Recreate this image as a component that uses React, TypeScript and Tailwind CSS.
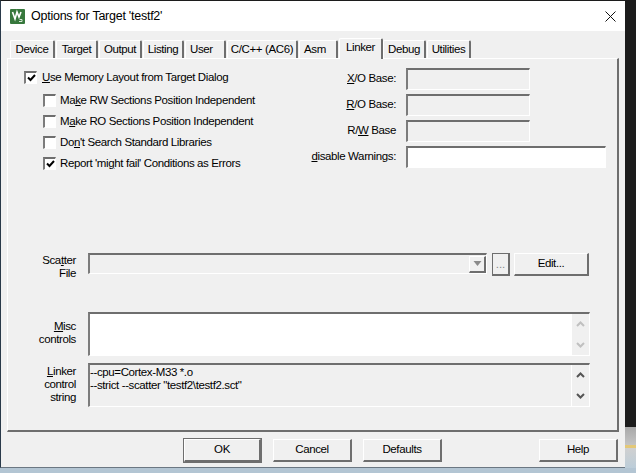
import React from 'react';

const font = 'font-["Liberation_Sans",Arial,sans-serif]';
const sunken = 'border-t-2 border-l-2 border-b border-r border-t-[#6e6e6e] border-l-[#7c7c7c] border-b-white border-r-white';
const raised = 'border-t border-l border-b-2 border-r-2 border-t-white border-l-white border-b-[#6e6e6e] border-r-[#6e6e6e]';

const tabs = [
  { label: 'Device', w: 'w-[45px]', align: 'text-center' },
  { label: 'Target', w: 'w-[42px]', align: 'text-center' },
  { label: 'Output', w: 'w-[43px]', align: 'text-center' },
  { label: 'Listing', w: 'w-[41px]', align: 'text-center' },
  { label: 'User', w: 'w-[41px]', align: 'text-left pl-[4px]' },
  { label: 'C/C++ (AC6)', w: 'w-[71px]', align: 'text-center' },
  { label: 'Asm', w: 'w-[39px]', align: 'text-left pl-[4px]' },
];

const Tab = ({ label, w, align = 'text-center' }: { label: string; w: string; align?: string }) => (
  <div className={`${w} ${align} h-[18px] mr-[1px] border-t border-l border-r-2 border-t-white border-l-white border-r-[#6e6e6e] rounded-t-[2px] leading-[17px] whitespace-nowrap`}>
    {label}
  </div>
);

const Check = ({ checked }: { checked?: boolean }) => (
  <span className={`${sunken} w-[13px] h-[13px] bg-white flex items-center justify-center shrink-0`}>
    {checked && (
      <svg width="9" height="8" viewBox="0 0 9 8">
        <path d="M1 3.5 L3.5 6 L8 1" fill="none" stroke="#000" strokeWidth="2" />
      </svg>
    )}
  </span>
);

const CheckRow = ({ checked, children }: { checked?: boolean; children: React.ReactNode }) => (
  <div className="flex items-center h-[21px] gap-[4px] ml-[35px]">
    <Check checked={checked} />
    <span className="mt-[1px]">{children}</span>
  </div>
);

const BaseField = ({ label, white }: { label: React.ReactNode; white?: boolean }) => (
  <div className="flex items-center h-[22px] mb-[4px]">
    <span className="w-[100px] text-right mr-[10px] whitespace-nowrap">{label}</span>
    <div className={`${sunken} h-[22px] ${white ? 'w-[200px] bg-white' : 'w-[124px]'}`} />
  </div>
);

const Chevron = ({ up, color }: { up?: boolean; color: string }) => (
  <svg width="9" height="6" viewBox="0 0 9 6">
    <path d={up ? 'M1 5 L4.5 1.5 L8 5' : 'M1 1 L4.5 4.5 L8 1'} fill="none" stroke={color} strokeWidth="2" />
  </svg>
);

const Label = ({ children }: { children: React.ReactNode }) => (
  <div className="w-[68px] text-right leading-[13px] shrink-0">{children}</div>
);

const Btn = ({ children, w, strong }: { children: string; w: string; strong?: boolean }) => (
  <div className={`${w} h-[23px] flex items-center justify-center ${raised} ${strong ? 'outline outline-1 outline-[#6e6e6e]' : ''}`}>
    {children}
  </div>
);

export default function App() {
  return (
    <div className={`${font} w-[636px] h-[473px] overflow-hidden flex flex-col bg-[#b3c5d3] text-[11.5px] text-black tracking-[-0.38px]`}>
      <div className="flex h-[468px]">
        <div className="w-[625px] flex flex-col border-l border-t border-b border-t-[#1c1c1c] border-l-[#2a3a4a] border-b-[#6b7782] bg-[#f0f0f0]">
          {/* title bar */}
          <div className="h-[30px] bg-white flex items-center pl-[9px] shrink-0">
            <svg width="15" height="15" viewBox="0 0 15 15">
              <rect width="15" height="15" rx="1" fill="#37783c" />
              <path d="M2.5 3 L5 10 L7 3 L9 8 L11 3" fill="none" stroke="#fff" strokeWidth="1.6" />
              <path d="M9 12.5 H12 V10.5 H9.5" fill="none" stroke="#d8e8d8" strokeWidth="1" />
            </svg>
            <span className="ml-[6px] text-[12.5px] tracking-[-0.25px]">Options for Target 'testf2'</span>
            <svg className="ml-auto mr-[9px]" width="11" height="11" viewBox="0 0 11 11">
              <path d="M0.5 0.5 L10.5 10.5 M10.5 0.5 L0.5 10.5" stroke="#111" strokeWidth="1" />
            </svg>
          </div>

          <div className="flex-1 px-[6px] pt-[6px] flex flex-col">
            {/* tabs */}
            <div className="flex items-end h-[21px] pl-[3px]">
              {tabs.map((t) => (
                <Tab key={t.label} label={t.label} w={t.w} align={t.align} />
              ))}
              <div className="w-[44px] h-[21px] -mb-[1px] z-10 bg-[#f0f0f0] border-t border-l border-r-2 border-t-white border-l-white border-r-[#6e6e6e] rounded-t-[2px] text-center leading-[17px]">
                Linker
              </div>
              <Tab label="Debug" w="w-[43px]" />
              <Tab label="Utilities" w="w-[44px]" />
            </div>

            {/* linker page */}
            <div className="w-[612px] h-[374px] border-t border-l border-r-2 border-b-2 border-t-white border-l-white border-r-[#6e6e6e] border-b-[#6e6e6e] flex flex-col">
              <div className="flex justify-between h-[184px] shrink-0">
                <div className="pt-[8px]">
                  <div className="flex items-center h-[21px] gap-[5px] ml-[16px] mb-[2px]">
                    <Check checked />
                    <span><u>U</u>se Memory Layout from Target Dialog</span>
                  </div>
                  <CheckRow>Ma<u>k</u>e RW Sections Position Independent</CheckRow>
                  <CheckRow>M<u>a</u>ke RO Sections Position Independent</CheckRow>
                  <CheckRow>Do<u>n</u>'t Search Standard Libraries</CheckRow>
                  <CheckRow checked>Report 'mi<u>g</u>ht fail' Conditions as Errors</CheckRow>
                </div>
                <div className="pt-[9px] w-[310px] mr-[11px]">
                  <BaseField label={<><u>X</u>/O Base:</>} />
                  <BaseField label={<><u>R</u>/O Base:</>} />
                  <BaseField label={<>R/<u>W</u> Base</>} />
                  <BaseField white label={<><u>d</u>isable Warnings:</>} />
                </div>
              </div>

              {/* scatter file */}
              <div className="flex h-[23px] mt-[10px] shrink-0">
                <Label>
                  <div className="mt-[1px]">Sca<u>t</u>ter</div>
                  <div>File</div>
                </Label>
                <div className={`${sunken} ml-[12px] w-[399px] h-[21px] flex justify-end items-center`}>
                  <div className={`${raised} w-[17px] h-[17px] flex items-center justify-center`}>
                    <svg width="9" height="5" viewBox="0 0 9 5"><path d="M0.5 0 H8.5 L4.5 5 Z" fill="#8a8a8a" /></svg>
                  </div>
                </div>
                <div className="ml-[5px] w-[18px] h-[23px] border-t border-l border-b-2 border-r-2 border-[#6e6e6e] flex items-end pb-[1px] justify-center text-[#8a8a8a] tracking-normal">...</div>
                <div className={`ml-[4px] w-[75px] h-[23px] flex items-center justify-center ${raised}`}>Edit...</div>
              </div>

              {/* misc controls */}
              <div className="flex h-[44px] mt-[36px] shrink-0">
                <Label>
                  <div className="mt-[8px]"><u>M</u>isc</div>
                  <div>controls</div>
                </Label>
                <div className={`${sunken} ml-[12px] w-[502px] bg-white flex justify-end`}>
                  <div className="w-[17px] bg-[#f0f0f0] flex flex-col items-center justify-between py-[7px]">
                    <Chevron up color="#c0c0c0" />
                    <Chevron color="#c0c0c0" />
                  </div>
                </div>
              </div>

              {/* linker control string */}
              <div className="flex h-[44px] mt-[7px] shrink-0">
                <Label>
                  <div className="mt-[2px]"><u>L</u>inker</div>
                  <div>control</div>
                  <div>string</div>
                </Label>
                <div className={`${sunken} ml-[12px] w-[502px] flex`}>
                  <div className="flex-1 pt-[1px] leading-[13px] whitespace-pre">
                    <div>--cpu=Cortex-M33 *.o</div>
                    <div>--strict --scatter "testf2\testf2.sct"</div>
                  </div>
                  <div className="w-[18px] border-l border-l-white flex flex-col items-center justify-between py-[7px]">
                    <Chevron up color="#555" />
                    <Chevron color="#555" />
                  </div>
                </div>
              </div>
            </div>

            {/* dialog buttons */}
            <div className="flex h-[23px] mt-[7px] pl-[177px]">
              <Btn w="w-[77px]" strong>OK</Btn>
              <div className="w-[12px]" />
              <Btn w="w-[79px]">Cancel</Btn>
              <div className="w-[11px]" />
              <Btn w="w-[79px]">Defaults</Btn>
              <div className="w-[97px]" />
              <Btn w="w-[79px]">Help</Btn>
            </div>
          </div>
        </div>

        {/* what lies behind the dialog */}
        <div className="w-[11px] flex flex-col">
          <div className="h-[427px] bg-[#1c1c1c]" />
          <div className="h-[18px] bg-gradient-to-b from-[#a8a8a8] to-[#c4c4c4]" />
          <div className="h-[3px] bg-[#e3c878]" />
          <div className="flex-1 bg-gradient-to-b from-[#d0d0d0] to-[#bccdd9]" />
        </div>
      </div>
    </div>
  );
}
